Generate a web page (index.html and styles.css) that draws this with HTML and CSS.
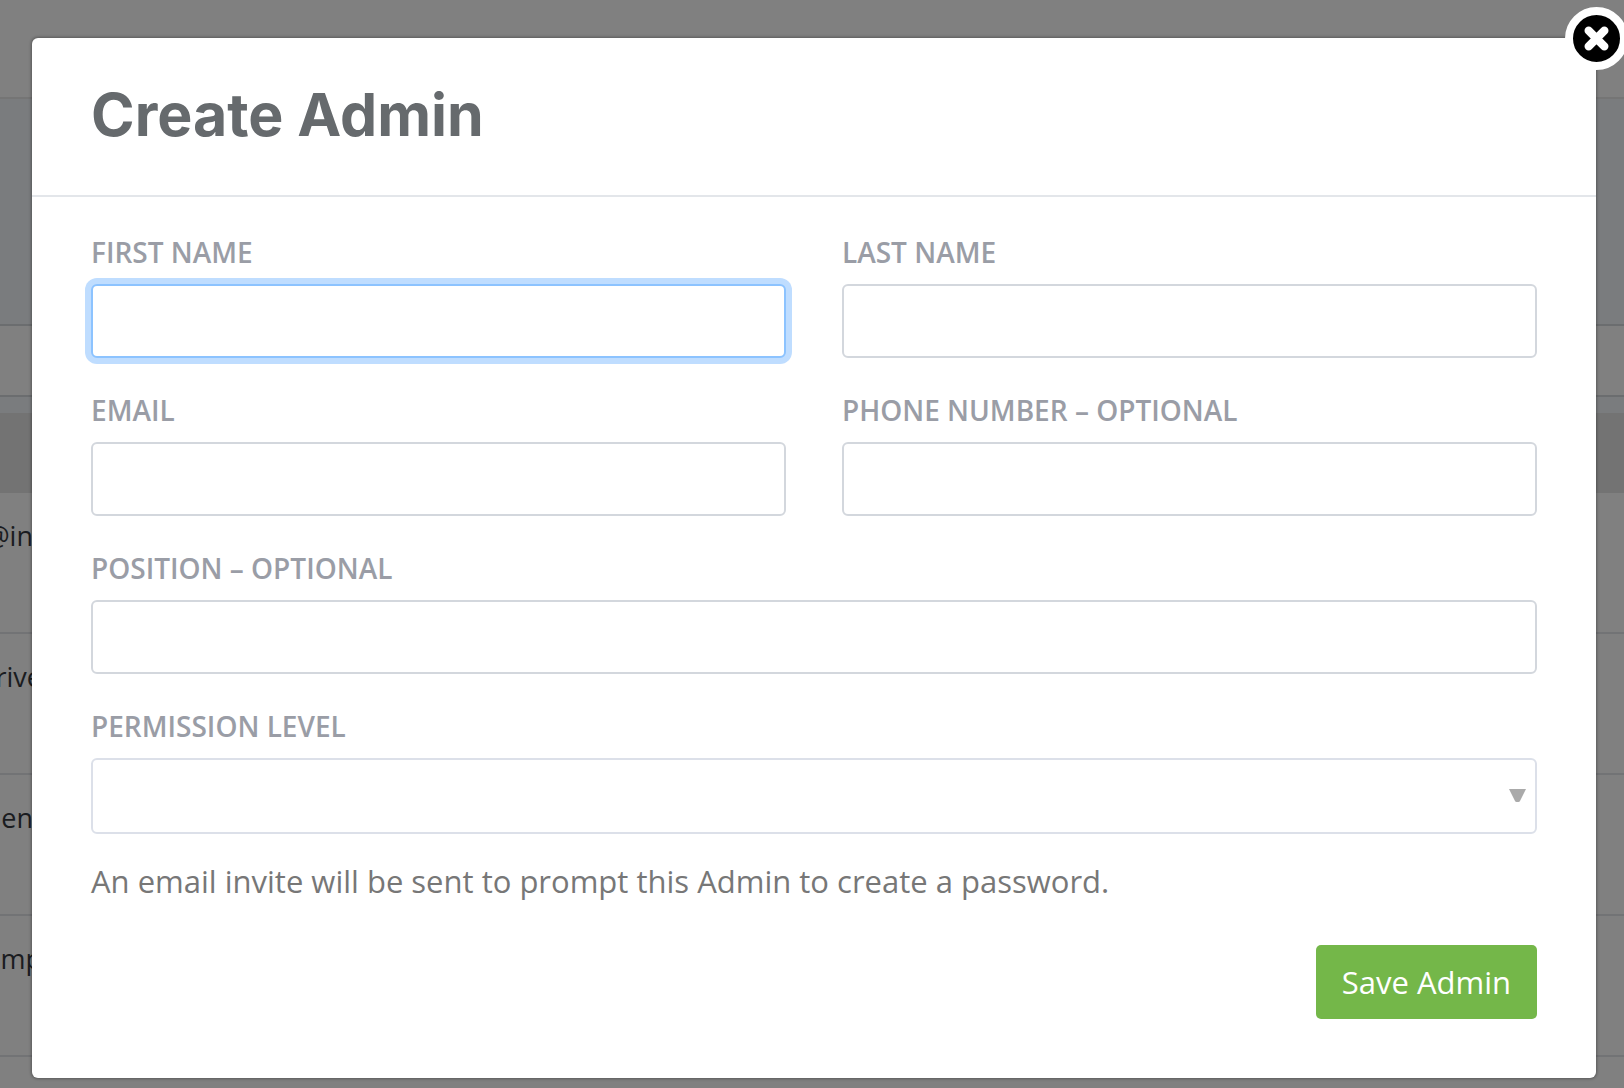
FILE: index.html
```html
<!DOCTYPE html>
<html lang="en">
<head>
<meta charset="utf-8">
<title>Create Admin</title>
<link rel="stylesheet" href="styles.css">
</head>
<body>
<div class="page" aria-hidden="true">
  <div class="topbar"></div>
  <div class="banner"></div>
  <div class="toolbar"></div>
  <div class="table-head"></div>
  <div class="row"><span class="cell cell-short">@in</span></div>
  <div class="row"><span class="cell">rive</span></div>
  <div class="row"><span class="cell cell-short">en</span></div>
  <div class="row"><span class="cell">mp</span></div>
  <div class="row"></div>
</div>
<div class="overlay">
  <section class="modal" role="dialog" aria-modal="true" aria-labelledby="title">
    <button class="close" type="button" aria-label="Close">
      <svg viewBox="0 0 48 48" aria-hidden="true"><path d="M16 16L32 32M32 16L16 32" stroke="#fff" stroke-width="8.500" stroke-linecap="round"/></svg>
    </button>
    <header class="modal-header"><h1 class="title" id="title">Create Admin</h1></header>
    <form class="form">
      <div class="fields">
        <div class="field">
          <label for="first">FIRST NAME</label>
          <input class="control focused" id="first" type="text">
        </div>
        <div class="field">
          <label for="last">LAST NAME</label>
          <input class="control" id="last" type="text">
        </div>
        <div class="field">
          <label for="email">EMAIL</label>
          <input class="control" id="email" type="email">
        </div>
        <div class="field">
          <label for="phone">PHONE NUMBER – OPTIONAL</label>
          <input class="control" id="phone" type="tel">
        </div>
        <div class="field wide">
          <label for="position">POSITION – OPTIONAL</label>
          <input class="control" id="position" type="text">
        </div>
        <div class="field wide">
          <label for="level">PERMISSION LEVEL</label>
          <div class="select-wrap">
            <select class="control select" id="level"><option value=""></option></select>
            <svg class="arrow" viewBox="0 0 17 13" aria-hidden="true"><path d="M0 0H17L11 12Q10.500 13 9.500 13H7.500Q6.500 13 6 12Z" fill="#aaa"/></svg>
          </div>
        </div>
      </div>
      <p class="help">An email invite will be sent to prompt this Admin to create a password.</p>
      <div class="actions"><button class="save" type="submit">Save Admin</button></div>
    </form>
  </section>
</div>
</body>
</html>
```
FILE: styles.css
```css
* { box-sizing: border-box; }

body {
  margin: 0;
  min-height: 100vh;
  position: relative;
  overflow: hidden;
  background: #808080;
  font-family: "Open Sans", "Noto Sans", sans-serif;
}

/* Dimmed page behind the dialog */
.page {
  position: absolute;
  inset: 0;
  overflow: hidden;
}
.topbar { height: 99px; border-bottom: 2px solid #757575; }
.banner { height: 227px; background: #7a7c7e; border-bottom: 2px solid #6b6d6f; }
.toolbar { height: 71px; border-bottom: 2px solid #6b6d6f; }
.table-head {
  height: 96px;
  background: #737373;
  border-top: 16px solid #7a7c7e;
}
.row {
  height: 141px;
  padding-top: 25px;
  border-bottom: 2px solid #727375;
}
.cell {
  display: flex;
  justify-content: flex-end;
  width: 42px;
  font-size: 27px;
  line-height: 36px;
  color: #1a1c20;
}
.cell-short { width: 33px; }

.overlay {
  position: relative;
  padding: 38px 28px 8px 32px;
  overflow: hidden;
}
.modal {
  position: relative;
  background: #fff;
  border-radius: 6px;
  box-shadow: 0 0 3px 1px rgba(0, 0, 0, 0.3);
}
.close {
  position: absolute;
  top: -31px;
  right: -32px;
  width: 63px;
  height: 63px;
  padding: 0;
  border: 8px solid #fff;
  border-radius: 50%;
  background: #000;
}
.close svg { display: block; }

.modal-header {
  padding: 41px 59px 44px;
  border-bottom: 2px solid #e3e6ea;
}
.title {
  margin: 0;
  font-family: Inter, sans-serif;
  font-size: 59px;
  line-height: 72px;
  font-weight: 700;
  color: #666a6d;
}

.form { padding: 36px 59px 59px; }
.fields {
  display: grid;
  grid-template-columns: 1fr 1fr;
  gap: 33px 56px;
}
.field {
  display: flex;
  flex-direction: column;
  gap: 13px;
}
.wide { grid-column: 1 / -1; }
.field label {
  font-size: 28px;
  line-height: 38px;
  font-weight: 600;
  color: #9a9da6;
}
.control {
  width: 100%;
  height: 74px;
  padding: 0 16px;
  border: 2px solid #d3d7dd;
  border-radius: 6px;
  background: #fff;
  font: inherit;
  font-size: 31px;
  color: #666a6d;
  outline: none;
}
.focused {
  border-color: #8cc3ff;
  box-shadow: 0 0 0 6px #bfddff;
}
.select-wrap { position: relative; }
.select {
  display: block;
  height: 76px;
  border-color: #dce0e9;
  appearance: none;
}
.arrow {
  position: absolute;
  top: 31px;
  right: 11px;
  width: 17px;
  height: 13px;
  pointer-events: none;
}
.help {
  margin: 27px 0 44px;
  font-size: 31px;
  line-height: 40px;
  color: #777;
}
.actions {
  display: flex;
  justify-content: flex-end;
}
.save {
  height: 74px;
  padding: 0 26px;
  border: 0;
  border-radius: 5px;
  background: #74b749;
  font: inherit;
  font-size: 31px;
  line-height: 40px;
  color: #fff;
}
```
